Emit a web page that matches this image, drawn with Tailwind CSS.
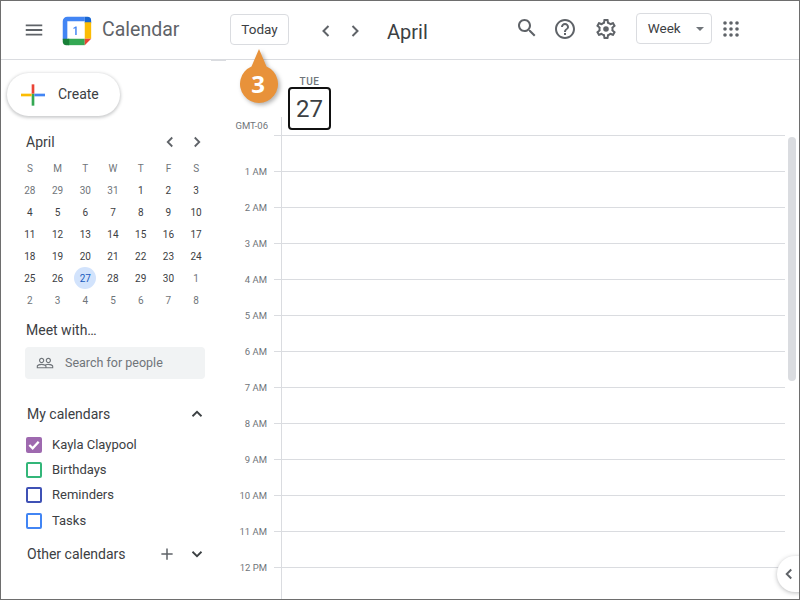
<!DOCTYPE html>
<html lang="en">
<head>
  <meta charset="UTF-8" />
  <title>Calendar</title>
  <script src="https://cdn.jsdelivr.net/npm/@tailwindcss/browser@4"></script>
</head>
<body class="bg-white font-['Roboto',sans-serif] text-[#3c4043]">
<div class="relative w-[800px] h-[600px] overflow-hidden border border-[#6e6e6e] bg-white">

  <!-- Top bar -->
  <header class="flex items-center h-[59px] border-b border-[#dadce0]">
    <svg class="ml-[22px] w-[22px] h-[22px] text-[#5f6368]" viewBox="0 0 24 24" fill="currentColor"><path d="M3 18h18v-2H3v2zm0-5h18v-2H3v2zm0-7v2h18V6H3z"/></svg>
    <svg class="ml-[15px] w-[33px] h-[33px]" viewBox="0 0 36 36">
      <path fill="#fff" d="M8 8h20v20H8z"/>
      <path fill="#4285f4" d="M3 8a5 5 0 0 1 5-5h19v5H8v20H3z"/>
      <path fill="#1967d2" d="M27 3h3a4 4 0 0 1 4 4v3h-7z"/>
      <path fill="#fbbc04" d="M27 9h7v18h-7z"/>
      <path fill="#34a853" d="M9 27h18v7H9z"/>
      <path fill="#188038" d="M3 27h7v7H7a4 4 0 0 1-4-4z"/>
      <path fill="#ea4335" d="M27 27h7l-7 7z"/>
      <path fill="#4285f4" d="M17 13.5l-2.600 1.900.7 1 1.500-1.100V23h1.600V13.500z"/>
    </svg>
    <span class="ml-[9px] w-[79px] text-[19.500px] leading-none text-[#5f6368]">Calendar</span>
    <button class="ml-[49px] w-[59px] h-[31px] -mt-[1px] rounded border border-[#dadce0] text-[13.5px] text-[#3c4043]">Today</button>
    <svg class="ml-[25px] w-[24px] h-[24px] mt-[1px] text-[#5f6368]" viewBox="0 0 24 24" fill="none" stroke="currentColor" stroke-width="2"><path d="M14.500 7l-5 5 5 5"/></svg>
    <svg class="ml-[5px] w-[24px] h-[24px] mt-[1px] text-[#5f6368]" viewBox="0 0 24 24" fill="none" stroke="currentColor" stroke-width="2"><path d="M9.500 7l5 5-5 5"/></svg>
    <span class="ml-[20px] text-[20px] leading-none mt-[3px] text-[#3c4043]">April</span>
    <svg class="ml-[87px] w-[24px] h-[24px] -mt-[5px] text-[#5f6368]" viewBox="0 0 24 24" fill="currentColor"><path d="M15.500 14h-.79l-.28-.27C15.410 12.590 16 11.110 16 9.500 16 5.910 13.090 3 9.500 3S3 5.910 3 9.500 5.910 16 9.500 16c1.610 0 3.090-.59 4.230-1.570l.27.28v.79l5 4.990L20.490 19l-4.990-5zm-6 0C7.010 14 5 11.990 5 9.500S7.010 5 9.500 5 14 7.010 14 9.500 11.990 14 9.500 14z"/></svg>
    <svg class="ml-[14px] w-[24px] h-[24px] -mt-[3px] text-[#5f6368]" viewBox="0 0 24 24" fill="currentColor"><path d="M11 18h2v-2h-2v2zm1-16C6.480 2 2 6.480 2 12s4.480 10 10 10 10-4.480 10-10S17.520 2 12 2zm0 18c-4.410 0-8-3.590-8-8s3.590-8 8-8 8 3.590 8 8-3.590 8-8 8zm0-14c-2.210 0-4 1.790-4 4h2c0-1.100.9-2 2-2s2 .9 2 2c0 2-3 1.750-3 5h2c0-2.250 3-2.500 3-5 0-2.210-1.790-4-4-4z"/></svg>
    <svg class="ml-[17px] w-[24px] h-[24px] -mt-[3px] text-[#5f6368]" viewBox="0 0 24 24" fill="currentColor"><path d="M19.43 12.98c.04-.32.07-.64.07-.98 0-.34-.03-.66-.07-.98l2.11-1.65c.19-.15.24-.42.12-.64l-2-3.46c-.09-.16-.26-.25-.44-.25-.06 0-.12.01-.17.03l-2.49 1c-.52-.4-1.08-.73-1.69-.98l-.38-2.65C14.46 2.18 14.25 2 14 2h-4c-.25 0-.46.18-.49.42l-.38 2.65c-.61.25-1.17.59-1.69.98l-2.49-1c-.06-.02-.12-.03-.18-.03-.17 0-.34.09-.43.25l-2 3.46c-.13.22-.07.49.12.64l2.11 1.65c-.04.32-.07.65-.07.98 0 .33.03.66.07.98l-2.11 1.65c-.19.15-.24.42-.12.64l2 3.46c.09.16.26.25.44.25.06 0 .12-.01.17-.03l2.49-1c.52.4 1.08.73 1.69.98l.38 2.65c.03.24.24.42.49.42h4c.25 0 .46-.18.49-.42l.38-2.65c.61-.25 1.17-.59 1.69-.98l2.49 1c.06.02.12.03.18.03.17 0 .34-.09.43-.25l2-3.46c.12-.22.07-.49-.12-.64l-2.11-1.65zm-1.98-1.71c.04.31.05.52.05.73 0 .21-.02.43-.05.73l-.14 1.13.89.7 1.08.84-.7 1.21-1.27-.51-1.04-.42-.9.68c-.43.32-.84.56-1.25.73l-1.06.43-.16 1.13-.2 1.35h-1.4l-.19-1.35-.16-1.13-1.06-.43c-.43-.18-.83-.41-1.23-.71l-.91-.7-1.06.43-1.27.51-.7-1.21 1.08-.84.89-.7-.14-1.13c-.03-.31-.05-.54-.05-.74s.02-.43.05-.73l.14-1.13-.89-.7-1.08-.84.7-1.21 1.27.51 1.04.42.9-.68c.43-.32.84-.56 1.25-.73l1.06-.43.16-1.13.2-1.35h1.39l.19 1.35.16 1.13 1.06.43c.43.18.83.41 1.23.71l.91.7 1.06-.43 1.27-.51.7 1.21-1.07.85-.89.7.14 1.13zM12 9.200a2.800 2.800 0 1 0 0 5.600 2.800 2.800 0 0 0 0-5.600z"/></svg>
    <div class="ml-[18px] flex items-center w-[76px] h-[31px] -mt-[3px] rounded border border-[#dadce0] pl-[11px]">
      <span class="text-[13.5px] text-[#3c4043]">Week</span>
      <span class="ml-[15px] w-0 h-0 border-x-[4px] border-x-transparent border-t-[4px] border-t-[#70757a]"></span>
    </div>
    <svg class="ml-[11px] w-[16px] h-[16px] -mt-[2px] text-[#5f6368]" viewBox="0 0 16 16" fill="currentColor">
      <circle cx="2" cy="2" r="1.800"/><circle cx="8" cy="2" r="1.800"/><circle cx="14" cy="2" r="1.800"/>
      <circle cx="2" cy="8" r="1.800"/><circle cx="8" cy="8" r="1.800"/><circle cx="14" cy="8" r="1.800"/>
      <circle cx="2" cy="14" r="1.800"/><circle cx="8" cy="14" r="1.800"/><circle cx="14" cy="14" r="1.800"/>
    </svg>
  </header>

  <div class="flex">
    <!-- Sidebar -->
    <aside class="w-[229px] shrink-0">
      <button class="ml-[6px] mt-[13px] flex items-center w-[113px] h-[43px] rounded-full bg-white shadow-[0_1px_3px_1px_rgba(60,64,67,0.25)]">
        <svg class="ml-[14px] w-[24px] h-[24px]" viewBox="0 0 36 36">
          <path fill="#34a853" d="M16 16h4v18h-4z"/>
          <path fill="#4285f4" d="M20 16h16v4H20z"/>
          <path fill="#fbbc04" d="M0 16h16v4H0z"/>
          <path fill="#ea4335" d="M16 2h4v14h-4z"/>
        </svg>
        <span class="ml-[13px] text-[14px] text-[#3c4043]">Create</span>
      </button>

      <div class="ml-[25px] mt-[14px] flex items-center h-[24px] w-[180px]">
        <span class="text-[14px] text-[#3c4043]">April</span>
        <svg class="ml-auto w-[18px] h-[18px] text-[#5f6368]" viewBox="0 0 24 24" fill="none" stroke="currentColor" stroke-width="2.400"><path d="M15 6l-6 6 6 6"/></svg>
        <svg class="ml-[9px] w-[18px] h-[18px] text-[#5f6368]" viewBox="0 0 24 24" fill="none" stroke="currentColor" stroke-width="2.400"><path d="M9 6l6 6-6 6"/></svg>
      </div>

      <div id="mini" class="ml-[15px] mt-[3px] grid grid-cols-7 w-[194px] auto-rows-[22px] text-[10px] text-center"></div>

      <div class="ml-[25px] mt-[9px] h-[20px] leading-[20px] text-[14px] text-[#3c4043]">Meet with…</div>
      <div class="ml-[24px] mt-[7px] flex items-center w-[180px] h-[32px] rounded bg-[#f1f3f4]">
        <svg class="ml-[11px] w-[18px] h-[18px] text-[#70757a]" viewBox="0 0 24 24" fill="currentColor"><path d="M16.500 13c-1.200 0-3.070.34-4.500 1-1.430-.67-3.300-1-4.500-1C5.330 13 1 14.080 1 16.250V19h22v-2.750c0-2.170-4.330-3.250-6.500-3.250zm-4 4.500h-10v-1.250c0-.54 2.560-1.750 5-1.750s5 1.210 5 1.750v1.250zm9 0H14v-1.250c0-.46-.2-.86-.52-1.220.88-.3 1.960-.53 3.020-.53 2.440 0 5 1.210 5 1.750v1.250zM7.500 12c1.930 0 3.500-1.570 3.500-3.500S9.430 5 7.500 5 4 6.570 4 8.500 5.570 12 7.500 12zm0-5.500c1.100 0 2 .9 2 2s-.9 2-2 2-2-.9-2-2 .9-2 2-2zm9 5.500c1.930 0 3.500-1.570 3.500-3.500S18.430 5 16.500 5 13 6.570 13 8.500s1.570 3.500 3.500 3.500zm0-5.500c1.100 0 2 .9 2 2s-.9 2-2 2-2-.9-2-2 .9-2 2-2z"/></svg>
        <span class="ml-[11px] text-[12.500px] text-[#70757a]">Search for people</span>
      </div>

      <div class="ml-[26px] mt-[25px] flex items-center h-[20px] w-[179px]">
        <span class="text-[14px] text-[#3c4043]">My calendars</span>
        <svg class="ml-auto w-[18px] h-[18px] text-[#3c4043]" viewBox="0 0 24 24" fill="none" stroke="currentColor" stroke-width="2.400"><path d="M6 15l6-6 6 6"/></svg>
      </div>

      <ul class="ml-[25px] mt-[8px] text-[13px] text-[#3c4043]">
        <li class="flex items-center h-[25px]">
          <span class="flex items-center justify-center w-[16px] h-[16px] rounded-[2px] bg-[#9e69af]">
            <svg class="w-[16px] h-[16px]" viewBox="0 0 24 24" fill="none" stroke="#fff" stroke-width="3.500"><path d="M5 12l5 5 9-10"/></svg>
          </span>
          <span class="ml-[10px]">Kayla Claypool</span>
        </li>
        <li class="flex items-center h-[25px]">
          <span class="w-[16px] h-[16px] rounded-[2px] border-2 border-[#33b679]"></span>
          <span class="ml-[10px]">Birthdays</span>
        </li>
        <li class="flex items-center h-[25px]">
          <span class="w-[16px] h-[16px] rounded-[2px] border-2 border-[#3f51b5]"></span>
          <span class="ml-[10px]">Reminders</span>
        </li>
        <li class="flex items-center h-[27px]">
          <span class="w-[16px] h-[16px] rounded-[2px] border-2 border-[#4285f4]"></span>
          <span class="ml-[10px]">Tasks</span>
        </li>
      </ul>

      <div class="ml-[26px] mt-[10px] flex items-center h-[20px] w-[179px]">
        <span class="text-[14px] text-[#3c4043]">Other calendars</span>
        <svg class="ml-auto w-[18px] h-[18px] text-[#5f6368]" viewBox="0 0 24 24" fill="currentColor"><path d="M19.500 13h-6.500v6.500h-2V13H4.500v-2H11V4.500h2V11h6.500z"/></svg>
        <svg class="ml-[12px] w-[18px] h-[18px] text-[#3c4043]" viewBox="0 0 24 24" fill="none" stroke="currentColor" stroke-width="2.400"><path d="M6 9l6 6 6-6"/></svg>
      </div>
    </aside>

    <!-- Week grid -->
    <main class="flex-1">
      <div class="flex items-end h-[75px] w-[555px]">
        <span class="w-[38px] text-right text-[9.500px] leading-[12px] mb-[3px] text-[#70757a]">GMT-06</span>
        <span class="ml-[13px] w-px h-[18px] bg-[#dadce0]"></span>
        <div class="ml-[6px] flex flex-col items-center w-[43px] mb-[5px]">
          <span class="text-[10px] font-medium leading-[12px] tracking-[0.5px] text-[#70757a]">TUE</span>
          <span class="-mt-px flex items-center justify-center w-[43px] h-[43px] rounded border-2 border-[#111] text-[24px] leading-none text-[#3c4043]">27</span>
        </div>
      </div>
      <div id="hours" class="w-[555px]"></div>
    </main>
  </div>

  <!-- Sidebar drag tab -->
  <span class="absolute left-[210px] top-[58px] w-[15px] h-[2px] bg-[#dadce0]"></span>

  <!-- Numbered callout -->
  <div class="absolute left-[238px] top-[45px] w-[40px] h-[58px]">
    <svg class="w-[40px] h-[58px] drop-shadow-[2px_2px_2px_rgba(0,0,0,0.3)]" viewBox="0 0 40 58"><path fill="#e8923a" d="M20 3l7.500 17.500a19 19 0 1 1-15 0z"/></svg>
    <span class="absolute left-0 top-[22px] w-[38px] text-center font-['Open_Sans',sans-serif] text-[24px] leading-[32px] font-bold text-white">3</span>
  </div>

  <!-- Scrollbar -->
  <span class="absolute left-[787px] top-[136px] w-[8px] h-[244px] rounded-full bg-[#dadce0]"></span>

  <!-- Side panel toggle -->
  <div class="absolute left-[776px] top-[555px] flex items-center w-[40px] h-[36px] rounded-l-full bg-white shadow-[0_1px_4px_rgba(60,64,67,0.35)]">
    <svg class="ml-[3px] w-[18px] h-[18px] text-[#5f6368]" viewBox="0 0 24 24" fill="none" stroke="currentColor" stroke-width="2.600"><path d="M15 6l-6 6 6 6"/></svg>
  </div>
</div>

<script>
  // mini month
  const mini = document.getElementById('mini');
  const heads = ['S', 'M', 'T', 'W', 'T', 'F', 'S'];
  heads.forEach((d) => {
    const el = document.createElement('div');
    el.className = 'flex items-center justify-center text-[#70757a]';
    el.textContent = d;
    mini.appendChild(el);
  });
  const days = [28,29,30,31,1,2,3,4,5,6,7,8,9,10,11,12,13,14,15,16,17,18,19,20,21,22,23,24,25,26,27,28,29,30,1,2,3,4,5,6,7,8];
  days.forEach((d, i) => {
    const el = document.createElement('div');
    const other = i < 4 || i > 33;
    if (i === 30) {
      el.className = 'flex items-center justify-center';
      el.innerHTML = '<span class="flex items-center justify-center w-[22px] h-[22px] rounded-full bg-[#d2e3fc] text-[#185abc]">27</span>';
    } else {
      el.className = other
        ? 'flex items-center justify-center text-[#70757a]'
        : 'flex items-center justify-center text-[#3c4043]';
      el.textContent = d;
    }
    mini.appendChild(el);
  });

  // hour rows
  const labels = ['', '1 AM', '2 AM', '3 AM', '4 AM', '5 AM', '6 AM', '7 AM', '8 AM', '9 AM', '10 AM', '11 AM', '12 PM'];
  const hours = document.getElementById('hours');
  labels.forEach((label) => {
    const row = document.createElement('div');
    row.className = 'flex h-[36px]';
    row.innerHTML =
      '<span class="w-[37px] -mt-[5px] h-[12px] text-right text-[9.500px] leading-[12px] text-[#70757a]">' + label + '</span>' +
      '<span class="ml-[7px] w-[7px] border-t border-[#dadce0]"></span>' +
      '<span class="flex-1 border-t border-l border-[#dadce0]"></span>';
    hours.appendChild(row);
  });
</script>
</body>
</html>
